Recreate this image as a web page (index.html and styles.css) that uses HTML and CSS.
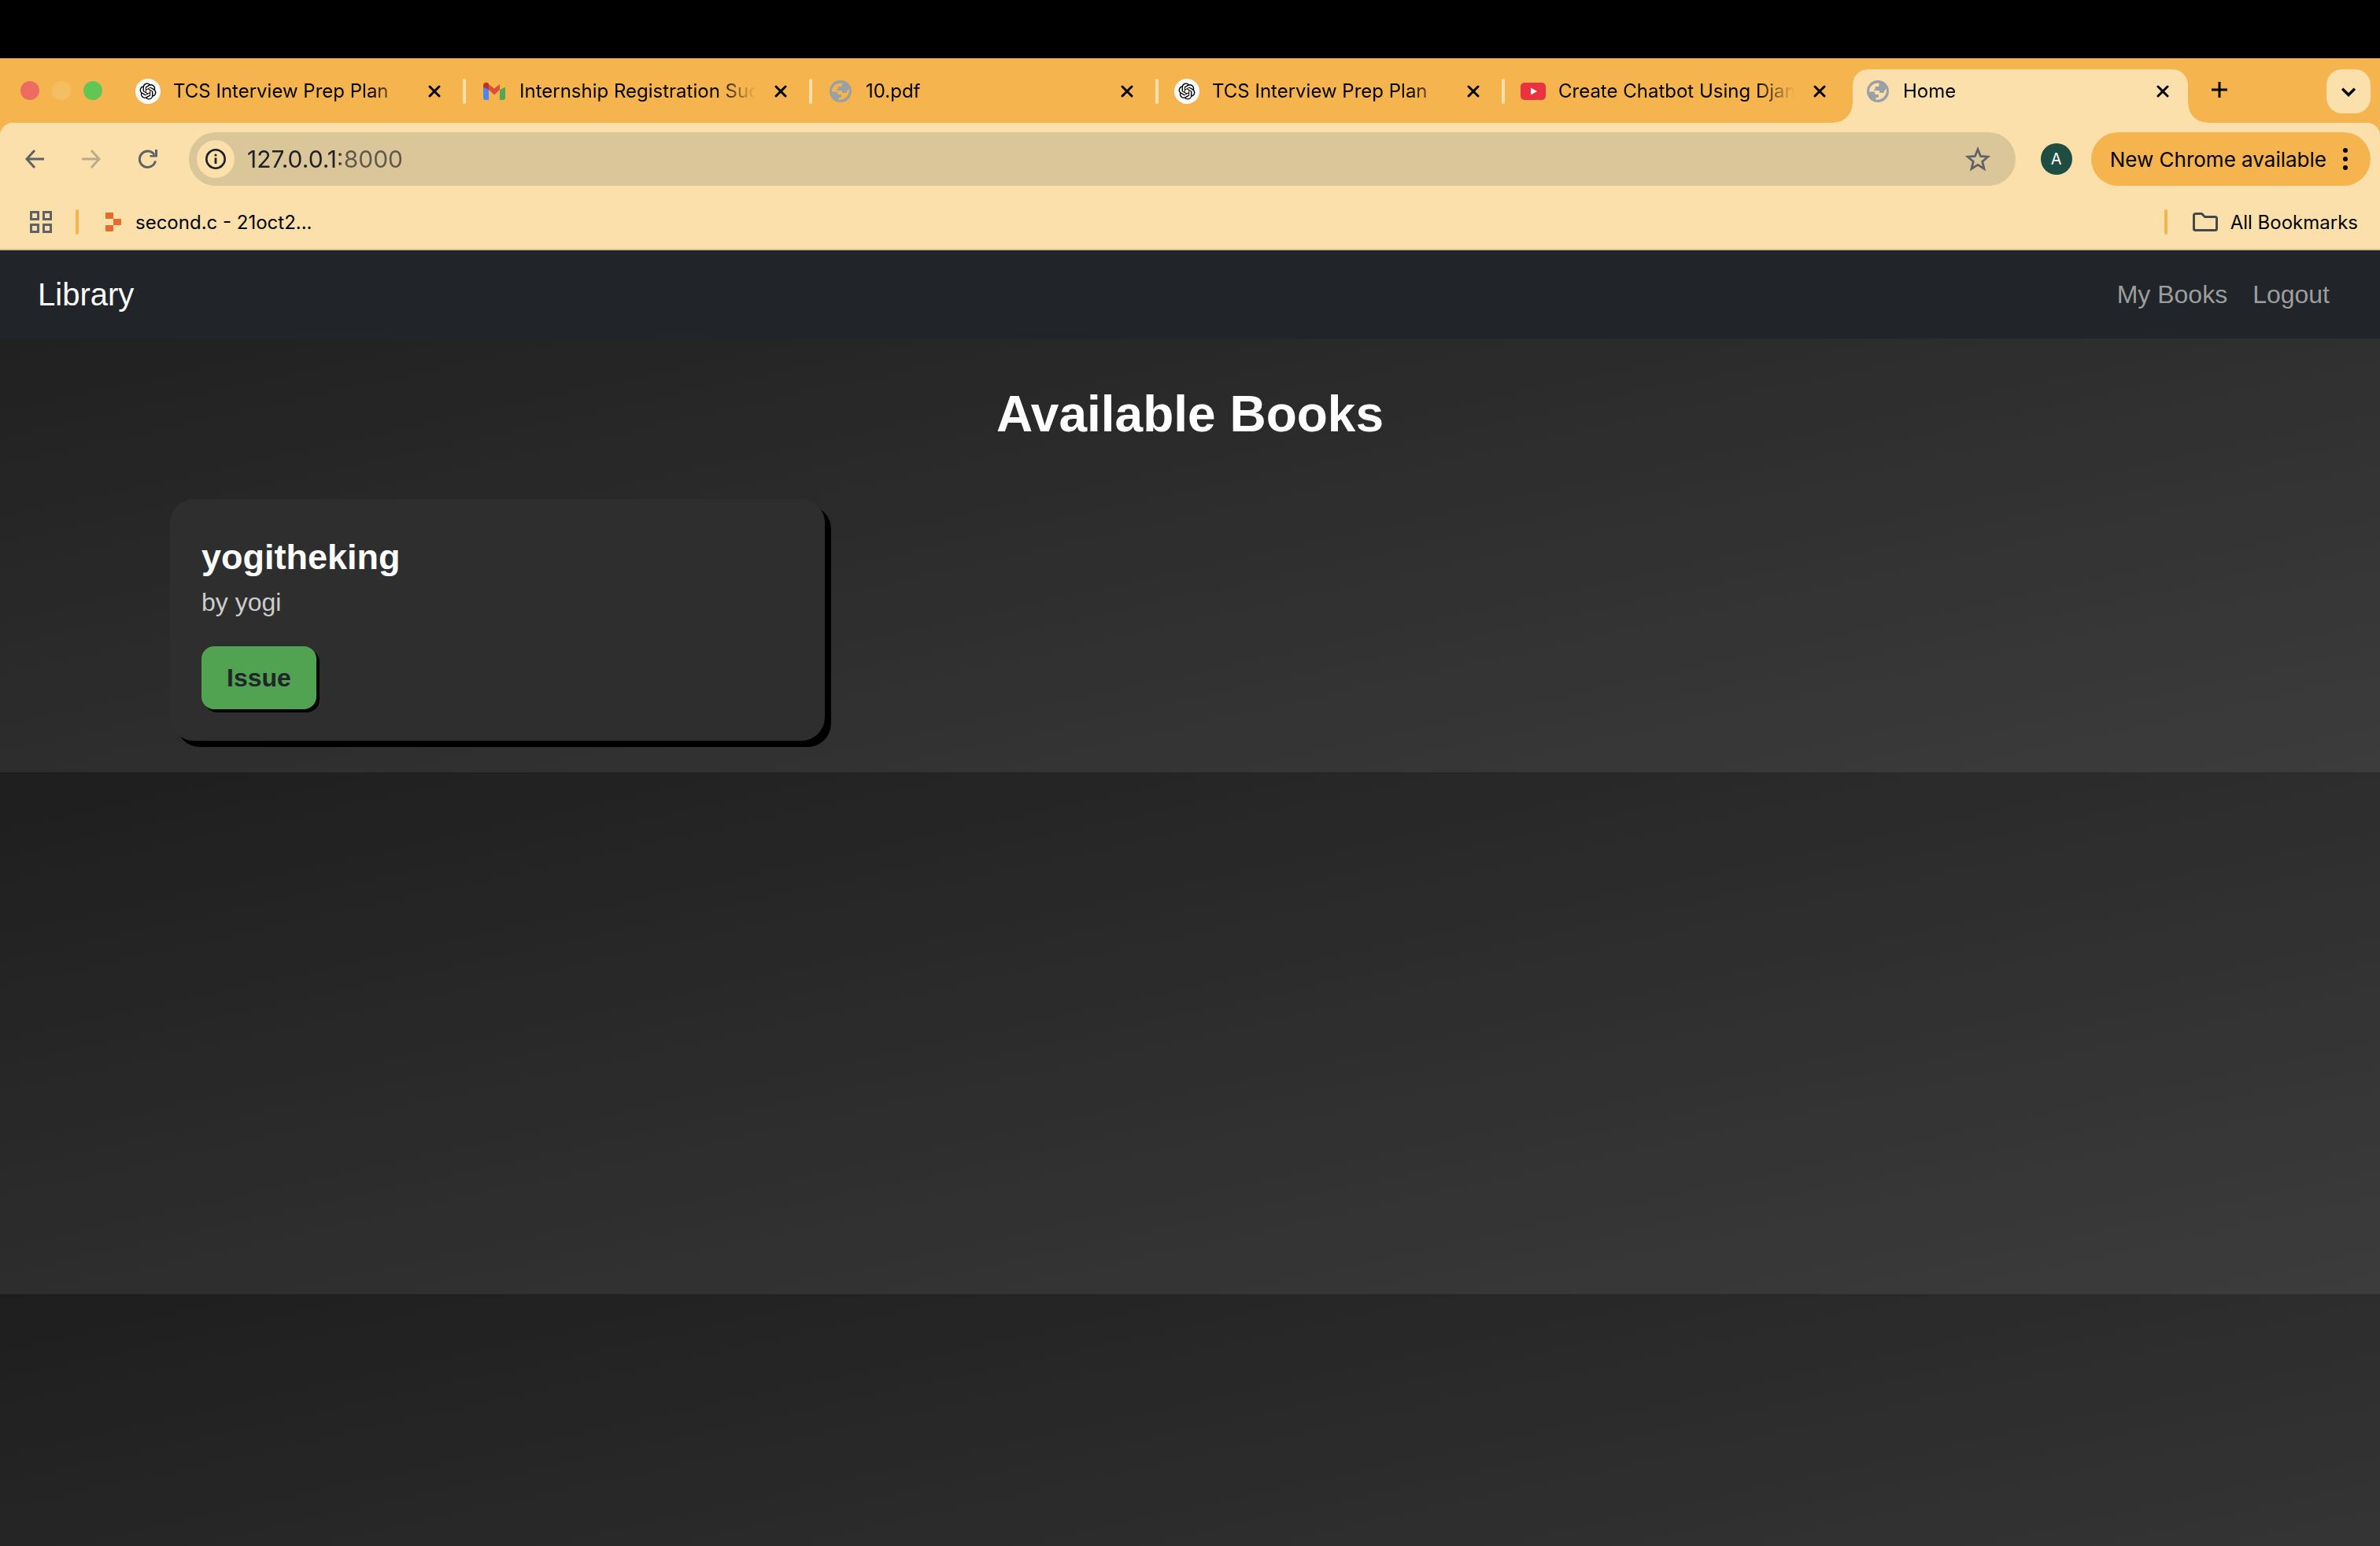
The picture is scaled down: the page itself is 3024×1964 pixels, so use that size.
FILE: index.html
```html
<!DOCTYPE html>
<html lang="en">
<head>
<meta charset="utf-8">
<title>Home</title>
<link rel="stylesheet" href="styles.css">
</head>
<body>
<svg class="sprite" aria-hidden="true">
  <symbol id="i-close" viewBox="0 0 16 16"><path d="M2 2l12 12M14 2L2 14" fill="none" stroke="#000" stroke-width="3" stroke-linecap="round"/></symbol>
  <symbol id="i-knot" viewBox="0 0 32 32"><circle cx="16" cy="16" r="16" fill="#fff"/><path transform="translate(5.5 5.5) scale(.875)" fill="#000" d="M22.2819 9.8211a5.9847 5.9847 0 0 0-.5157-4.9108 6.0462 6.0462 0 0 0-6.5098-2.9A6.0651 6.0651 0 0 0 4.9807 4.1818a5.9847 5.9847 0 0 0-3.9977 2.9 6.0462 6.0462 0 0 0 .7427 7.0966 5.98 5.98 0 0 0 .511 4.9107 6.051 6.051 0 0 0 6.5146 2.9001A5.9847 5.9847 0 0 0 13.2599 24a6.0557 6.0557 0 0 0 5.7718-4.2058 5.9894 5.9894 0 0 0 3.9977-2.9001 6.0557 6.0557 0 0 0-.7475-7.0729zm-9.022 12.6081a4.4755 4.4755 0 0 1-2.8764-1.0408l.1419-.0804 4.7783-2.7582a.7948.7948 0 0 0 .3927-.6813v-6.7369l2.02 1.1686a.071.071 0 0 1 .038.052v5.5826a4.504 4.504 0 0 1-4.4945 4.4944zm-9.6607-4.1254a4.4708 4.4708 0 0 1-.5346-3.0137l.142.0852 4.783 2.7582a.7712.7712 0 0 0 .7806 0l5.8428-3.3685v2.3324a.0804.0804 0 0 1-.0332.0615L9.74 19.9502a4.4992 4.4992 0 0 1-6.1408-1.6464zM2.3408 7.8956a4.485 4.485 0 0 1 2.3655-1.9728V11.6a.7664.7664 0 0 0 .3879.6765l5.8144 3.3543-2.0201 1.1685a.0757.0757 0 0 1-.071 0l-4.8303-2.7865A4.504 4.504 0 0 1 2.3408 7.872zm16.5963 3.8558L13.1038 8.364 15.1192 7.2a.0757.0757 0 0 1 .071 0l4.8303 2.7913a4.4944 4.4944 0 0 1-.6765 8.1042v-5.6772a.79.79 0 0 0-.407-.667zm2.0107-3.0231l-.142-.0852-4.7735-2.7818a.7759.7759 0 0 0-.7854 0L9.409 9.2297V6.8974a.0662.0662 0 0 1 .0284-.0615l4.8303-2.7866a4.4992 4.4992 0 0 1 6.6802 4.66zM8.3065 12.863l-2.02-1.1638a.0804.0804 0 0 1-.038-.0567V6.0742a4.4992 4.4992 0 0 1 7.3757-3.4537l-.142.0805L8.704 5.459a.7948.7948 0 0 0-.3927.6813zm1.0976-2.3654l2.602-1.4998 2.6069 1.4998v2.9994l-2.5974 1.4997-2.6067-1.4997Z"/></symbol>
  <symbol id="i-globe" viewBox="0 0 32 32"><circle cx="16" cy="16" r="14" fill="#9aa0a6"/><path class="globe-land" d="M5 16.500C5 10 10 5.200 17.500 5.500V8.500q0 1.500-1.500 1.500h-3q-.5 0-.5 1v2.500h-1.500V15h6q1 0 1 1.500T20 18h2.500q1.500 0 1.500-1.500t1.500-2.500l1.300-1.500c1.200 7.500-3.500 14.500-13.300 14.200V24h2q1.500 0 1.500-1.500V21q0-1-1-1h-3q-1 0-1-1v-2.500z"/></symbol>
</svg>

<header class="browser">
  <div class="screen-edge"></div>
  <div class="tabstrip">
    <div class="lights"><button class="light close-light" aria-label="Close window"></button><button class="light min-light" aria-label="Minimise"></button><button class="light max-light" aria-label="Full screen"></button></div>
    <div class="tab">
      <svg class="favicon"><use href="#i-knot"/></svg>
      <span class="tab-title">TCS Interview Prep Plan</span>
      <button class="tab-close" aria-label="Close tab"><svg><use href="#i-close"/></svg></button>
    </div>
    <div class="tab">
      <svg class="favicon" viewBox="0 0 32 32"><path d="M2 9v15.500c0 1.500 1 2.500 2.500 2.500H9V14z" fill="#4e86f0"/><path d="M30 9v15.500c0 1.500-1 2.500-2.500 2.500H23V14z" fill="#53a653"/><path d="M9 14v-7l7 5.500L23 7v7l-7 6.500z" fill="#dc4f3d"/><path d="M2 9c0-4 4-5 6-3.500L9 6.500V14L2 10.500z" fill="#b8352b"/><path d="M30 9c0-4-4-5-6-3.500L23 6.500V14l7-3.500z" fill="#f3bc3b"/></svg>
      <span class="tab-title">Internship Registration Successful</span>
      <button class="tab-close" aria-label="Close tab"><svg><use href="#i-close"/></svg></button>
    </div>
    <div class="tab">
      <svg class="favicon"><use href="#i-globe"/></svg>
      <span class="tab-title">10.pdf</span>
      <button class="tab-close" aria-label="Close tab"><svg><use href="#i-close"/></svg></button>
    </div>
    <div class="tab">
      <svg class="favicon"><use href="#i-knot"/></svg>
      <span class="tab-title">TCS Interview Prep Plan</span>
      <button class="tab-close" aria-label="Close tab"><svg><use href="#i-close"/></svg></button>
    </div>
    <div class="tab">
      <svg class="favicon" viewBox="0 0 32 32"><rect x="0" y="5" width="32" height="22" rx="5" fill="#eb323f"/><path d="M13 11.500v9l8-4.500z" fill="#fff"/></svg>
      <span class="tab-title">Create Chatbot Using Django</span>
      <button class="tab-close" aria-label="Close tab"><svg><use href="#i-close"/></svg></button>
    </div>
    <div class="tab active">
      <svg class="favicon"><use href="#i-globe"/></svg>
      <span class="tab-title">Home</span>
      <button class="tab-close" aria-label="Close tab"><svg><use href="#i-close"/></svg></button>
    </div>
    <button class="new-tab" aria-label="New tab"><svg viewBox="0 0 20 20"><path d="M10 0v20M0 10h20" stroke="#000" stroke-width="3"/></svg></button>
    <button class="tab-search" aria-label="Search tabs"><svg viewBox="0 0 16 16"><path d="M1 5l7 7 7-7" fill="none" stroke="#000" stroke-width="3"/></svg></button>
  </div>

  <div class="toolbar">
    <button class="nav-btn" aria-label="Back"><svg viewBox="0 0 24 24"><path d="M24 12H2M12 1L2 12l10 11" fill="none" stroke="#5f6368" stroke-width="3"/></svg></button>
    <button class="nav-btn" aria-label="Forward" disabled><svg viewBox="0 0 24 24"><path d="M0 12h22M12 1l10 11-10 11" fill="none" stroke="#b9ab8c" stroke-width="3"/></svg></button>
    <button class="nav-btn" aria-label="Reload"><svg viewBox="0 0 24 24"><path d="M21.500 14.500a10.200 10.200 0 1 1-1.500-8" fill="none" stroke="#5f6368" stroke-width="3"/><path d="M24 0v9.500h-9.500V7H21V0z" fill="#5f6368"/></svg></button>
    <div class="omnibox">
      <button class="site-info" aria-label="Site information"><svg viewBox="0 0 26 26"><circle cx="13" cy="13" r="11.700" fill="none" stroke="#1f2125" stroke-width="2.600"/><path d="M13 11.500V19" stroke="#1f2125" stroke-width="2.800"/><circle cx="13" cy="8" r="1.600" fill="#1f2125"/></svg></button>
      <input class="url" type="text" aria-label="Address" value="127.0.0.1:8000">
      <button class="star" aria-label="Bookmark this page"><svg viewBox="0 0 32 32"><path d="M16 2.800l3.500 8.700 9.300.7-7.100 6 2.300 9.300L16 22.400 8 27.500l2.300-9.300-7.100-6 9.300-.7z" transform="translate(0 1)" fill="none" stroke="#5f6368" stroke-width="2.800"/></svg></button>
    </div>
    <button class="avatar">A</button>
    <button class="update">New Chrome available<svg viewBox="0 0 8 28"><circle cx="4" cy="3" r="3"/><circle cx="4" cy="14" r="3"/><circle cx="4" cy="25" r="3"/></svg></button>
  </div>

  <div class="bookmarks">
    <button class="apps" aria-label="Apps"><svg viewBox="0 0 28 28"><path d="M1.500 1.500h9v9h-9zM17.500 1.500h9v9h-9zM1.500 17.500h9v9h-9zM17.500 17.500h9v9h-9z" fill="none" stroke="#5f6368" stroke-width="3"/></svg></button>
    <span class="divider"></span>
    <a class="bookmark" href="#"><svg class="replit" viewBox="0 0 22 24"><path d="M1 0h9v8H0V1a1 1 0 0 1 1-1zM10 8h9a1 1 0 0 1 1 1v6a1 1 0 0 1-1 1h-9zM0 16h10v7a1 1 0 0 1-1 1H1a1 1 0 0 1-1-1z" fill="#e36d2f"/></svg>second.c - 21oct2...</a>
    <span class="divider end"></span>
    <a class="bookmark" href="#"><svg class="folder" viewBox="0 0 32 24"><path d="M3.500 1.500h8l4 4h13a2 2 0 0 1 2 2v13a2 2 0 0 1-2 2h-25a2 2 0 0 1-2-2v-17a2 2 0 0 1 2-2z" fill="none" stroke="#47484c" stroke-width="3"/></svg>All Bookmarks</a>
  </div>
</header>

<div class="page">
  <nav class="navbar">
    <a class="brand" href="#">Library</a>
    <a class="nav-link" href="#">My Books</a>
    <a class="nav-link" href="#">Logout</a>
  </nav>
  <main class="container">
    <h1>Available Books</h1>
    <div class="books">
      <article class="card">
        <h2>yogitheking</h2>
        <p>by yogi</p>
        <button class="issue">Issue</button>
      </article>
    </div>
  </main>
</div>
</body>
</html>
```
FILE: styles.css
```css
:root {
  --frame: #f5b44d;
  --bar: #fbe0ac;
  --ui: Inter, "Liberation Sans", sans-serif;
  --site: "Liberation Sans", Arial, sans-serif;
}

* { box-sizing: border-box; }

body {
  margin: 0;
  min-height: 100vh;
  display: flex;
  flex-direction: column;
  font-family: var(--site);
}

button {
  border: 0;
  padding: 0;
  margin: 0;
  background: none;
  font: inherit;
  color: inherit;
}

a { color: inherit; text-decoration: none; }
svg { display: block; }
.sprite { display: none; }

/* Browser frame */
.browser {
  font-family: var(--ui);
  font-size: 24px;
  color: #000;
  background: var(--frame);
}

.screen-edge { height: 74px; background: #000; }

.tabstrip {
  height: 82px;
  display: flex;
  padding: 14px 12px 0 26px;
}

.lights {
  flex: none;
  width: 124px;
  display: flex;
  gap: 16px;
  padding-top: 15px;
}

.light { width: 24px; height: 24px; border-radius: 50%; }
.close-light { background: #ed6b60; }
.min-light { background: #f4bf63; }
.max-light { background: #62c655; }

.tab {
  --tab-fill: var(--frame);
  flex: 0 1 440px;
  min-width: 0;
  height: 56px;
  display: flex;
  align-items: center;
  padding: 0 30px 0 22px;
  position: relative;
}

.tab:not(.active):not(:nth-child(6))::after {
  content: "";
  position: absolute;
  right: -2px;
  top: 12px;
  width: 4px;
  height: 32px;
  border-radius: 2px;
  background: var(--bar);
}

.favicon { flex: none; width: 32px; height: 32px; margin-right: 16px; }
.globe-land { fill: var(--tab-fill); }

.tab-title {
  flex: 1;
  overflow: hidden;
  white-space: nowrap;
  line-height: 32px;
  margin-right: 24px;
  mask-image: linear-gradient(to left, transparent, #000 48px);
}

.tab-close svg { width: 16px; height: 16px; }

.tab.active {
  --tab-fill: var(--bar);
  flex-basis: 426px;
  height: 68px;
  margin-left: 4px;
  padding: 0 24px 12px 16px;
  border-radius: 20px 20px 0 0;
  background: var(--bar);
}

.tab.active::before,
.tab.active::after {
  content: "";
  position: absolute;
  bottom: 0;
  width: 24px;
  height: 24px;
}

.tab.active::before {
  right: 100%;
  background: radial-gradient(circle at 0 0, transparent 23px, var(--bar) 24px);
}

.tab.active::after {
  left: 100%;
  background: radial-gradient(circle at 100% 0, transparent 23px, var(--bar) 24px);
}

.new-tab { flex: none; align-self: flex-start; padding: 16px 0 0 30px; }
.new-tab svg { width: 20px; height: 20px; }

.tab-search {
  flex: none;
  width: 56px;
  height: 56px;
  margin-left: auto;
  border-radius: 20px;
  background: var(--bar);
  display: grid;
  place-items: center;
}

.tab-search svg { width: 18px; height: 18px; }

.toolbar {
  display: flex;
  align-items: center;
  padding: 12px 12px 12px 32px;
  border-radius: 16px 16px 0 0;
  background: var(--bar);
}

.nav-btn { flex: none; margin-right: 48px; }
.nav-btn svg { width: 24px; height: 24px; }

.omnibox {
  flex: 1;
  height: 68px;
  display: flex;
  align-items: center;
  margin-left: -8px;
  padding: 0 32px 0 10px;
  border-radius: 34px;
  background: #dbc69a;
}

.site-info {
  width: 48px;
  height: 48px;
  border-radius: 50%;
  background: var(--bar);
  display: grid;
  place-items: center;
}

.site-info svg { width: 26px; height: 26px; }

/* The host is drawn darker than the port that follows it */
.url {
  flex: 1;
  min-width: 0;
  height: 48px;
  margin: 0 16px;
  padding: 0;
  border: 0;
  outline: 0;
  font: 30px/48px var(--ui);
  color: transparent;
  background: linear-gradient(90deg, #1f2125 118px, #5f584b 118px);
  background-clip: text;
}

.star svg { width: 32px; height: 32px; }

.avatar {
  width: 40px;
  height: 40px;
  margin: 0 24px 0 32px;
  border-radius: 50%;
  background: #1f4d42;
  color: #fff;
  font-size: 20px;
  line-height: 40px;
}

.update {
  height: 68px;
  display: flex;
  align-items: center;
  gap: 20px;
  padding: 0 28px 0 24px;
  border-radius: 34px;
  background: var(--frame);
  font-size: 26px;
}

.update svg { width: 8px; height: 28px; }

.bookmarks {
  height: 70px;
  display: flex;
  align-items: center;
  padding: 0 28px 0 38px;
  border-bottom: 2px solid #d5c397;
  background: var(--bar);
}

.apps svg { width: 28px; height: 28px; }

.divider {
  width: 4px;
  height: 32px;
  margin: 0 34px 0 30px;
  border-radius: 2px;
  background: var(--frame);
}

.divider.end { margin: 0 32px 0 auto; }

.bookmark { display: flex; align-items: center; gap: 16px; }
.replit { width: 22px; height: 24px; }
.folder { width: 32px; height: 24px; }

/* Library site */
.page {
  flex: 1;
  background: linear-gradient(to bottom right, #1e1e1e, #3c3c3c) 0 0 / 100% 663px;
  color: #fff;
  font-size: 32px;
  line-height: 48px;
}

.navbar {
  height: 112px;
  display: flex;
  align-items: center;
  padding: 0 48px;
  background: #212529;
}

.brand { font-size: 40px; margin-right: auto; }
.nav-link { padding: 0 16px; color: #9b9d9e; }

.container {
  max-width: 2640px;
  margin: 0 auto;
  padding: 56px 24px 40px;
}

h1 {
  margin: 0 0 68px;
  font-size: 64px;
  line-height: 80px;
  text-align: center;
}

.books {
  display: grid;
  grid-template-columns: repeat(3, 1fr);
  gap: 48px;
}

.card {
  padding: 40px;
  border-radius: 30px;
  background: #2e2e2e;
  box-shadow: 8px 8px 0 #000;
}

.card h2 { margin: 0; font-size: 45px; line-height: 67px; }
.card p { margin: 0 0 32px; color: #ccc; }

.issue {
  display: block;
  height: 80px;
  padding: 0 32px;
  border-radius: 16px;
  background: #51a351;
  box-shadow: 4px 4px 0 #000;
  color: #212529;
  font-weight: bold;
}
```
